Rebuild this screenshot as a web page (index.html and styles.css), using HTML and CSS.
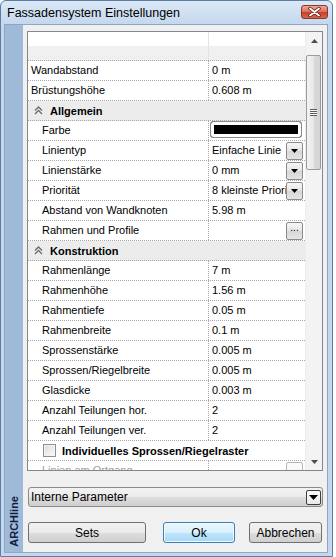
FILE: index.html
```html
<!DOCTYPE html>
<html lang="de">
    <head>
        <meta charset="UTF-8">
        <title>Fassadensystem Einstellungen</title>
        <link rel="stylesheet" href="styles.css">
    </head>
<body>
    <div class="window">
        <div class="titlebar">
            <span class="title">Fassadensystem Einstellungen</span>
            <button class="close">
                <svg width="13" height="10" viewbox="0 0 13 10">
                    <path d="M2 1.5l9 7M11 1.5l-9 7" stroke="#5a1a10" stroke-width="3.4" stroke-linecap="round"/>
                    <path d="M2 1.5l9 7M11 1.5l-9 7" stroke="#fff" stroke-width="1.8" stroke-linecap="round"/>
                </svg>
            </button>
        </div>
        <div class="frame">
            <div class="brand"><span>ARCHline</span></div>
            <div class="client">
                <div class="propgrid">
                    <div class="rows">
                        <div class="head">
                            <div class="head-top"><span></span><span></span></div>
                            <div class="head-bottom"><span></span><span></span></div>
                        </div>
                        <div class="row"><div class="label">Wandabstand</div><div class="value">0 m</div></div>
                        <div class="row"><div class="label">Brüstungshöhe</div><div class="value">0.608 m</div></div>

                        <div class="category">
                            <svg class="fold" width="9" height="9" viewbox="0 0 9 9" fill="none" stroke="#6b6b6b" stroke-width="1.3">
                                <path d="M1 4.5l3.5-3.5 3.5 3.5"/>
                                <path d="M1 8l3.5-3.5 3.5 3.5"/>
                            </svg>
                            Allgemein
                        </div>
                        <div class="row child"><div class="label">Farbe</div><div class="value"><span class="swatch"></span></div></div>
                        <div class="row child">
                            <div class="label">Linientyp</div>
                            <div class="value pick"><span class="text">Einfache Linie</span><span class="drop"><svg width="7" height="4" viewbox="0 0 7 4"><path d="M0 0h7L3.5 4z" fill="#000"/></svg></span></div>
                        </div>
                        <div class="row child">
                            <div class="label">Linienstärke</div>
                            <div class="value pick"><span class="text">0 mm</span><span class="drop"><svg width="7" height="4" viewbox="0 0 7 4"><path d="M0 0h7L3.5 4z" fill="#000"/></svg></span></div>
                        </div>
                        <div class="row child">
                            <div class="label">Priorität</div>
                            <div class="value pick"><span class="text">8 kleinste Priorität</span><span class="drop"><svg width="7" height="4" viewbox="0 0 7 4"><path d="M0 0h7L3.5 4z" fill="#000"/></svg></span></div>
                        </div>
                        <div class="row child"><div class="label">Abstand von Wandknoten</div><div class="value">5.98 m</div></div>
                        <div class="row child">
                            <div class="label">Rahmen und Profile</div>
                            <div class="value pick"><span class="text"></span><span class="more">...</span></div>
                        </div>

                        <div class="category">
                            <svg class="fold" width="9" height="9" viewbox="0 0 9 9" fill="none" stroke="#6b6b6b" stroke-width="1.3">
                                <path d="M1 4.5l3.5-3.5 3.5 3.5"/>
                                <path d="M1 8l3.5-3.5 3.5 3.5"/>
                            </svg>
                            Konstruktion
                        </div>
                        <div class="row child"><div class="label">Rahmenlänge</div><div class="value">7 m</div></div>
                        <div class="row child"><div class="label">Rahmenhöhe</div><div class="value">1.56 m</div></div>
                        <div class="row child"><div class="label">Rahmentiefe</div><div class="value">0.05 m</div></div>
                        <div class="row child"><div class="label">Rahmenbreite</div><div class="value">0.1 m</div></div>
                        <div class="row child"><div class="label">Sprossenstärke</div><div class="value">0.005 m</div></div>
                        <div class="row child"><div class="label">Sprossen/Riegelbreite</div><div class="value">0.005 m</div></div>
                        <div class="row child"><div class="label">Glasdicke</div><div class="value">0.003 m</div></div>
                        <div class="row child"><div class="label">Anzahl Teilungen hor.</div><div class="value">2</div></div>
                        <div class="row child"><div class="label">Anzahl Teilungen ver.</div><div class="value">2</div></div>

                        <div class="check-row"><span class="checkbox"></span>Individuelles Sprossen/Riegelraster</div>
                        <div class="row child disabled">
                            <div class="label">Linien am Ortgang</div>
                            <div class="value pick"><span class="text"></span><span class="more">...</span></div>
                        </div>
                    </div>
                    <div class="scrollbar">
                        <span class="arrow"><svg width="7" height="4" viewbox="0 0 7 4"><path d="M0 4h7L3.5 0z" fill="#4d4d4d"/></svg></span>
                        <div class="track">
                            <div class="thumb"><span class="grip"></span></div>
                        </div>
                        <span class="arrow"><svg width="7" height="4" viewbox="0 0 7 4"><path d="M0 0h7L3.5 4z" fill="#4d4d4d"/></svg></span>
                    </div>
                </div>

                <div class="param-select">
                    <span>Interne Parameter</span>
                    <span class="param-drop"><svg width="9" height="5" viewbox="0 0 9 5"><path d="M0 0h9L4.5 5z" fill="#000"/></svg></span>
                </div>

                <div class="actions">
                    <button class="btn sets">Sets</button>
                    <button class="btn ok">Ok</button>
                    <button class="btn cancel">Abbrechen</button>
                </div>
            </div>
        </div>
    </div>
</body>
</html>
```

FILE: styles.css
```css
:root {
    --frame: #c4d7ed;
    --strip: #9fb9d8;
    --face: #f0f0f0;
    --line: #a7a7a7;
}

* {
    margin: 0;
    padding: 0;
    box-sizing: border-box;
}

body {
    width: 336px;
    height: 557px;
    overflow: hidden;
    background: #fff;
    font-family: "Liberation Sans", Arial, sans-serif;
    font-size: 11px;
    color: #000;
}

.window {
    width: 333px;
    height: 557px;
    display: flex;
    flex-direction: column;
    padding: 0 4px 3px 3px;
    border: 1px solid #5d7ea3;
    border-radius: 6px 6px 0 0;
    background: linear-gradient(#dbe8f6, var(--frame) 24px);
}

.titlebar {
    height: 23px;
    display: flex;
    align-items: center;
    justify-content: space-between;
    padding-left: 3px;
}

.title {
    font-size: 12.5px;
    color: #000;
}

.close {
    width: 27px;
    height: 14px;
    margin-top: -1px;
    display: flex;
    align-items: center;
    justify-content: center;
    border: 1px solid #8a3a2c;
    border-radius: 3px;
    background: linear-gradient(#eea597, #dc6e58 50%, #c8412a 51%, #d86548);
}

.frame {
    flex: 1;
    display: flex;
    border: 1px solid #8da6c4;
    background: var(--face);
}

.brand {
    width: 18px;
    display: flex;
    align-items: flex-end;
    justify-content: center;
    padding-bottom: 5px;
    background: var(--strip);
}

.brand span {
    writing-mode: vertical-rl;
    transform: rotate(180deg);
    font-weight: bold;
    font-size: 11px;
    color: #10203a;
}

.client {
    flex: 1;
    display: flex;
    flex-direction: column;
    padding: 6px 4px 0 4px;
}

/* property grid */

.propgrid {
    height: 440px;
    display: flex;
    border: 1px solid #828790;
    background: #fff;
}

.rows {
    flex: 1;
    overflow: hidden;
}

.head-top,
.head-bottom {
    display: grid;
    grid-template-columns: 180px 1fr;
    height: 14px;
}

.head-bottom {
    height: 15px;
    background: #f0f0f0;
    border-bottom: 1px dotted var(--line);
}

.head-top span + span,
.head-bottom span + span {
    border-left: 1px solid #e3e3e3;
}

.row {
    display: grid;
    grid-template-columns: 180px 1fr;
    height: 20px;
    border-bottom: 1px dotted var(--line);
    line-height: 19px;
}

.label {
    padding-left: 3px;
    white-space: nowrap;
    overflow: hidden;
}

.child .label {
    padding-left: 14px;
}

.value {
    border-left: 1px dotted var(--line);
    padding-left: 3px;
    white-space: nowrap;
    overflow: hidden;
}

.pick {
    display: flex;
    align-items: center;
    padding-right: 2px;
}

.pick .text {
    flex: 1;
    overflow: hidden;
}

.drop,
.more {
    width: 17px;
    height: 18px;
    display: flex;
    align-items: center;
    justify-content: center;
    border: 1px solid #8b8b8b;
    border-radius: 2px;
    background: linear-gradient(#f6f6f6, #e6e6e6 50%, #d7d7d7 51%, #e4e4e4);
}

.more {
    align-items: flex-start;
    line-height: 10px;
    font-size: 10px;
}

.swatch {
    display: block;
    width: 92px;
    height: 17px;
    margin-left: -2px;
    border: 1px solid #8b8b8b;
    border-radius: 3px;
    background: #000;
    box-shadow: inset 0 0 0 3px #fff;
}

.category {
    display: flex;
    align-items: center;
    height: 20px;
    padding-left: 6px;
    border-bottom: 1px dotted var(--line);
    background: #ececec;
    font-weight: bold;
    gap: 7px;
}

.check-row {
    display: flex;
    align-items: center;
    height: 20px;
    padding-left: 15px;
    border-bottom: 1px dotted var(--line);
    font-weight: bold;
    gap: 6px;
}

.checkbox {
    width: 13px;
    height: 13px;
    border: 1px solid #8f8f8f;
    background: linear-gradient(135deg, #dcdcdc, #fafafa);
    box-shadow: inset 0 0 0 1px #f4f4f4;
}

.disabled {
    color: #a0a0a0;
}

.disabled .more {
    border-color: #b5b5b5;
    background: #fafafa;
}

/* scrollbar */

.scrollbar {
    width: 17px;
    display: flex;
    flex-direction: column;
    background: #f3f3f3;
    border-left: 1px solid #ececec;
}

.arrow {
    height: 17px;
    display: flex;
    align-items: center;
    justify-content: center;
}

.track {
    flex: 1;
    padding: 6px 1px 0 0;
}

.thumb {
    height: 115px;
    display: flex;
    align-items: center;
    justify-content: center;
    border: 1px solid #9b9b9b;
    border-radius: 2px;
    background: linear-gradient(90deg, #f3f3f3, #e8e8e8 50%, #d9d9d9 51%, #d4d4d4);
}

.grip {
    width: 7px;
    height: 7px;
    background: repeating-linear-gradient(#5c5c5c 0 1px, #f8f8f8 1px 2px);
}

/* bottom controls */

.param-select {
    height: 20px;
    margin-top: 16px;
    margin-left: 1px;
    display: flex;
    align-items: center;
    justify-content: space-between;
    padding: 0 1px 0 2px;
    border: 1px solid #8a8a8a;
    border-radius: 3px;
    background: linear-gradient(#f2f2f2, #ebebeb 50%, #dddddd 51%, #cfcfcf);
    font-size: 12px;
}

.param-drop {
    width: 15px;
    height: 15px;
    display: flex;
    align-items: center;
    justify-content: center;
    border: 1px solid #3d3d3d;
    border-radius: 2px;
    background: linear-gradient(#fdfdfd, #e9e9e9);
}

.actions {
    display: flex;
    margin-top: 15px;
    margin-left: 1px;
}

.btn {
    height: 21px;
    border: 1px solid #707070;
    border-radius: 3px;
    background: linear-gradient(#f2f2f2, #ebebeb 50%, #dddddd 51%, #cfcfcf);
    font-family: "Liberation Sans", Arial, sans-serif;
    font-size: 12px;
    color: #000;
}

.sets {
    width: 118px;
}

.ok {
    width: 72px;
    margin-left: 17px;
    border-color: #3c7fb1;
    background: linear-gradient(#eaf6fd, #d9f0fc 50%, #bee6fd 51%, #a7d9f5);
    box-shadow: inset 0 0 0 1px #f2fbff;
}

.cancel {
    width: 73px;
    margin-left: 14px;
}
```
